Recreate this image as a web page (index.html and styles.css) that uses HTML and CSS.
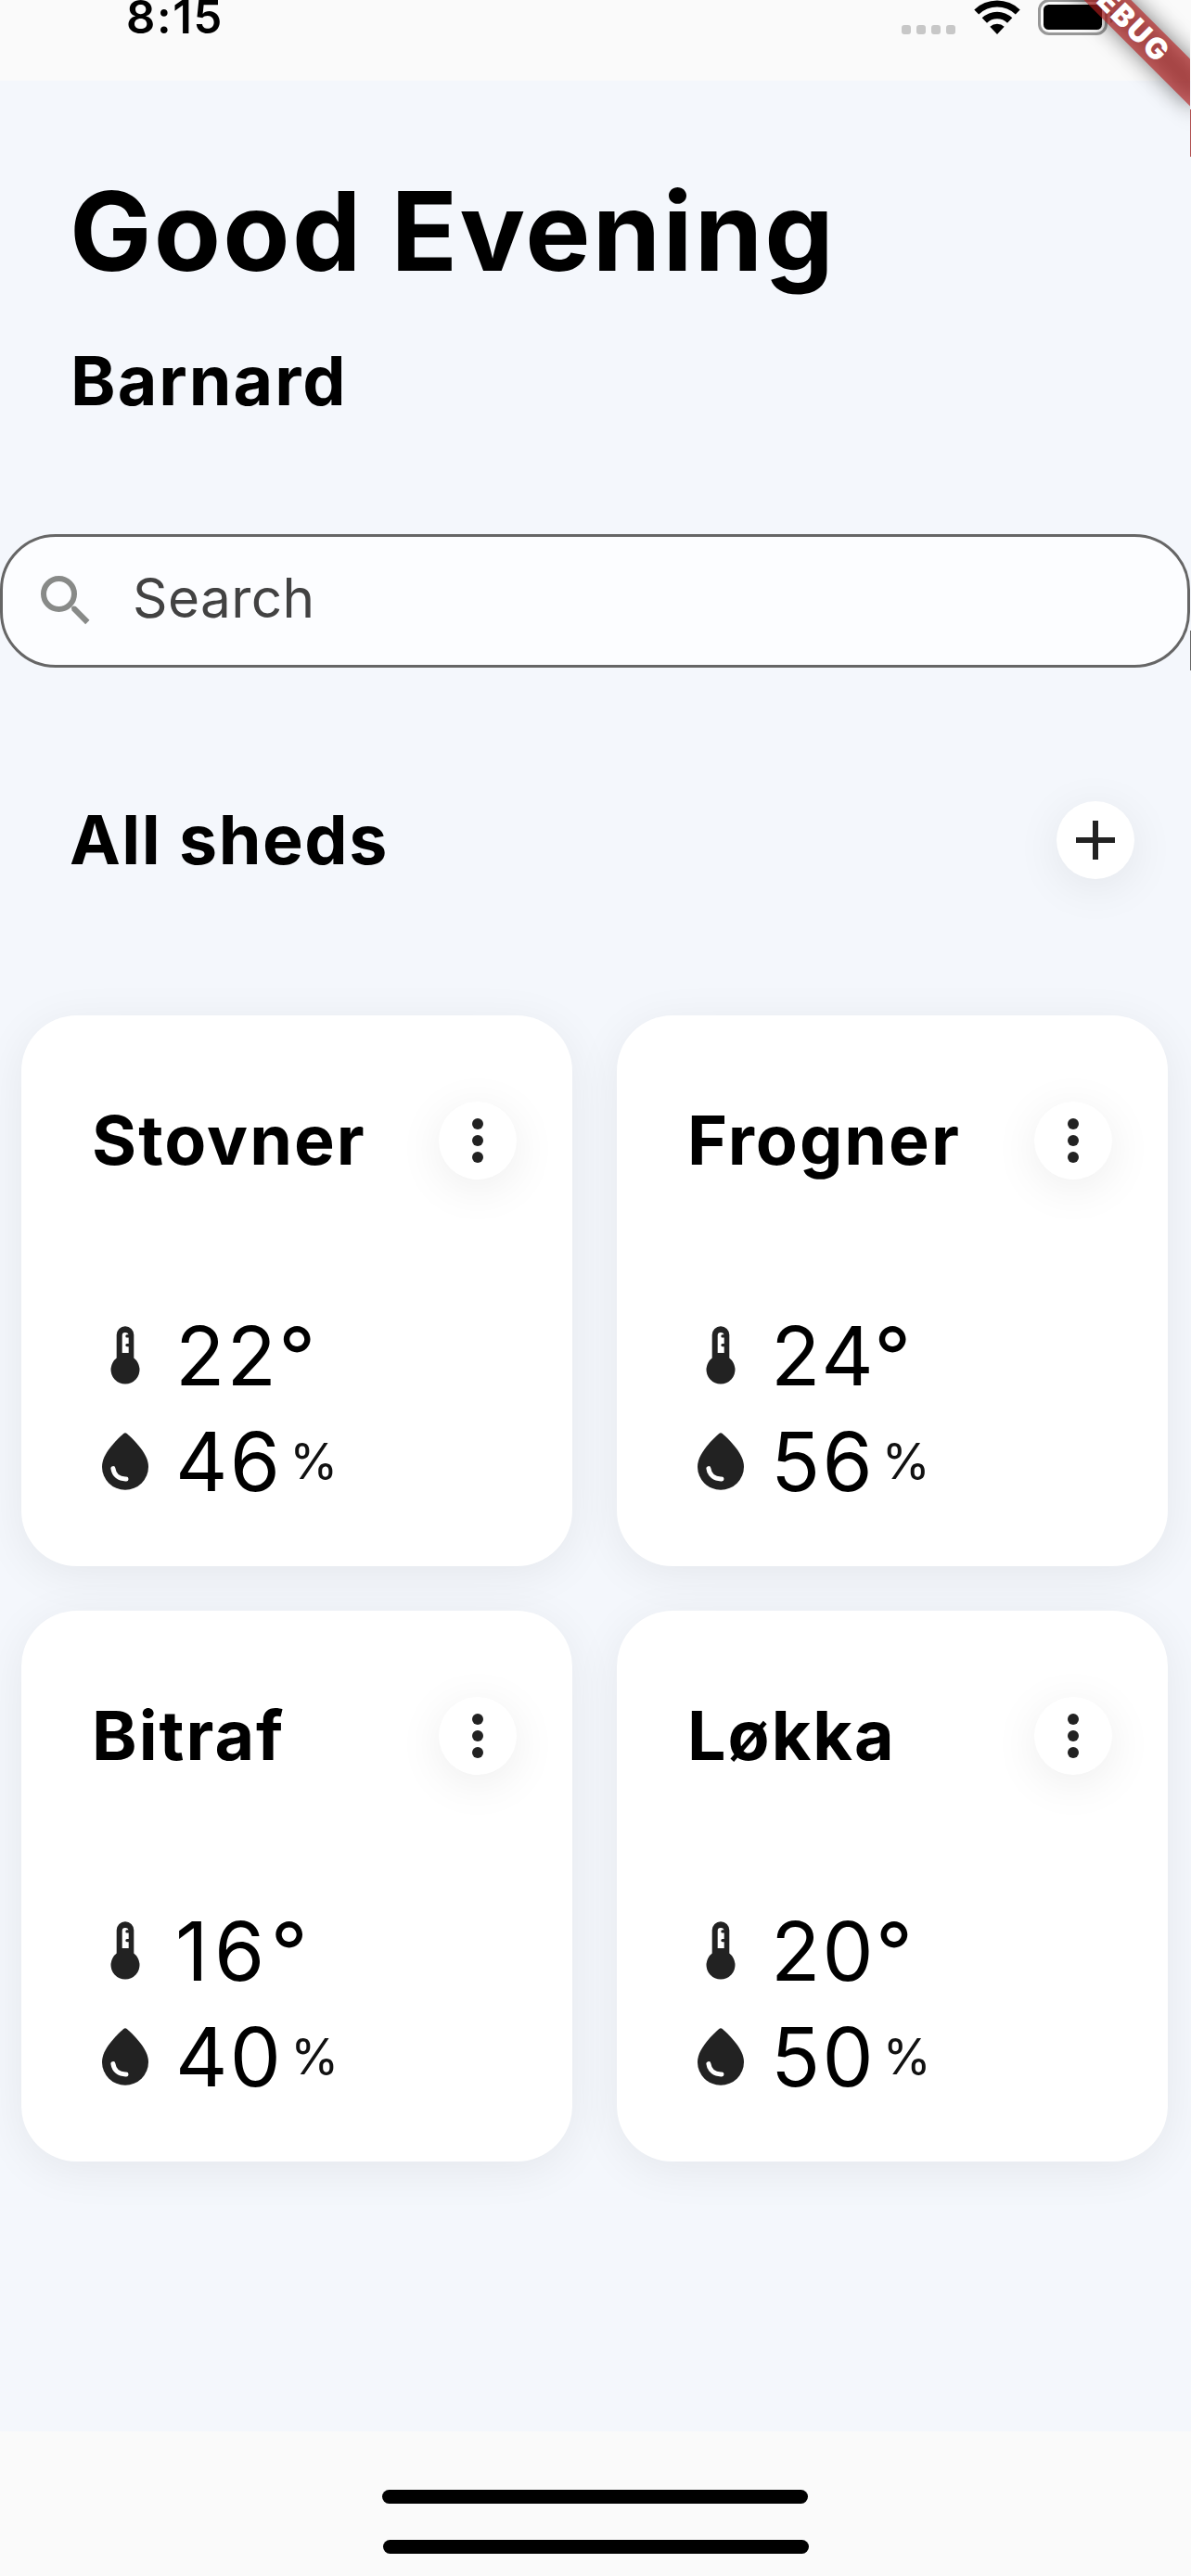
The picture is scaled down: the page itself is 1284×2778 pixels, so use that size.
FILE: index.html
```html
<!DOCTYPE html>
<html lang="en">
<head>
<meta charset="utf-8">
<title>Sheds</title>
<link rel="stylesheet" href="styles.css">
</head>
<body>
<svg class="symbols" aria-hidden="true">
  <symbol id="thermometer" viewBox="0 0 72 72">
    <path fill="#222" d="M26.7 38.6V13.6a9.3 9.3 0 0 1 18.6 0v25A15.5 15.5 0 1 1 26.7 38.6z"/>
    <path fill="#fff" d="M32.7 33V14.3a3.3 3.3 0 0 1 3.5-3.3q2.6 0 3.4 2.3h-1.700a1.600 1.600 0 0 0 0 3.200h1.800v6.500h-1.800a1.600 1.600 0 0 0 0 3.200h1.800V33z"/>
  </symbol>
  <symbol id="drop" viewBox="0 0 72 72">
    <path fill="#222" d="M34.200 6.100q1.800-1.600 3.600 0C46 13.500 61 28 61 41.700a25 25 0 0 1-50 0C11 28 26 13.500 34.200 6.100z"/>
    <path fill="none" stroke="#fff" stroke-width="5" stroke-linecap="round" d="M22.900 43.600C24 51 29.500 55.200 37 54.900"/>
  </symbol>
  <symbol id="more" viewBox="0 0 72 72">
    <g fill="#222"><circle cx="36" cy="18" r="6"/><circle cx="36" cy="36" r="6"/><circle cx="36" cy="54" r="6"/></g>
  </symbol>
</svg>

<header class="status">
  <span class="time">8:15</span>
  <div class="indicators">
    <div class="signal"><i></i><i></i><i></i><i></i></div>
    <svg class="wifi" width="50" height="38" viewBox="0 0 50 38">
      <path d="M0.300 10.400A35.500 35.500 0 0 1 49.700 10.400L44.800 15.500A28.500 28.500 0 0 0 5.200 15.500z"/>
      <path d="M8.700 19.300A23.500 23.500 0 0 1 41.300 19.300L36 24.700A16 16 0 0 0 14 24.700z"/>
      <path d="M17.300 28.700A11.500 11.500 0 0 1 32.700 28.700L25 37z"/>
    </svg>
    <svg class="battery" width="84" height="40" viewBox="0 0 84 40">
      <rect x="1.500" y="1.500" width="72" height="36" rx="10.500" fill="none" stroke="#979797" stroke-width="3"/>
      <rect x="6" y="6" width="63" height="27" rx="5.500"/>
      <path fill="#979797" d="M78 14q4 2 4 6t-4 6z"/>
    </svg>
  </div>
</header>

<main class="screen">
  <h1 class="greeting">Good Evening</h1>
  <h2 class="name">Barnard</h2>

  <div class="search">
    <svg class="search-icon" width="72" height="72" viewBox="0 0 24 24"><circle cx="9.500" cy="9.500" r="5.500" fill="none" stroke="#888a88" stroke-width="2"/><path fill="#888a88" d="M14 14.700q0-.900.900-.900l.700.200 4.900 4.900-1.450 1.500L14.200 15.500z"/></svg>
    <span class="search-hint">Search</span>
  </div>

  <div class="section">
    <h2 class="section-title">All sheds</h2>
    <button class="round"><svg width="72" height="72" viewBox="0 0 72 72"><path fill="#222" d="M33 15h6v18h18v6H39v18h-6V39H15v-6h18z"/></svg></button>
  </div>

  <div class="grid">
    <article class="card">
      <div class="card-head"><h3>Stovner</h3><button class="round"><svg width="72" height="72"><use href="#more"/></svg></button></div>
      <div class="reading"><svg width="72" height="72"><use href="#thermometer"/></svg><span class="value">22°</span></div>
      <div class="reading"><svg width="72" height="72"><use href="#drop"/></svg><span class="value">46</span><span class="unit">%</span></div>
    </article>
    <article class="card">
      <div class="card-head"><h3>Frogner</h3><button class="round"><svg width="72" height="72"><use href="#more"/></svg></button></div>
      <div class="reading"><svg width="72" height="72"><use href="#thermometer"/></svg><span class="value">24°</span></div>
      <div class="reading"><svg width="72" height="72"><use href="#drop"/></svg><span class="value">56</span><span class="unit">%</span></div>
    </article>
    <article class="card">
      <div class="card-head"><h3>Bitraf</h3><button class="round"><svg width="72" height="72"><use href="#more"/></svg></button></div>
      <div class="reading"><svg width="72" height="72"><use href="#thermometer"/></svg><span class="value value-wide">16°</span></div>
      <div class="reading"><svg width="72" height="72"><use href="#drop"/></svg><span class="value">40</span><span class="unit">%</span></div>
    </article>
    <article class="card">
      <div class="card-head"><h3>Løkka</h3><button class="round"><svg width="72" height="72"><use href="#more"/></svg></button></div>
      <div class="reading"><svg width="72" height="72"><use href="#thermometer"/></svg><span class="value">20°</span></div>
      <div class="reading"><svg width="72" height="72"><use href="#drop"/></svg><span class="value">50</span><span class="unit">%</span></div>
    </article>
  </div>
</main>

<footer class="home"><div class="bar"></div><div class="bar bar-system"></div></footer>

<div class="ribbon-clip">
  <div class="ribbon-shadow"></div>
  <div class="ribbon">DEBUG</div>
</div>
<div class="edge edge-ribbon"></div>
<div class="edge edge-field"></div>
</body>
</html>
```
FILE: styles.css
```css
* { box-sizing: border-box; }

body {
  position: relative;
  display: flex;
  flex-direction: column;
  width: 1284px;
  height: 2778px;
  margin: 0;
  overflow: hidden;
  background: #fafafa;
  color: #000;
  font-family: Inter, "Liberation Sans", sans-serif;
}

h1, h2, h3 { margin: 0; font-weight: 700; white-space: nowrap; }
svg { display: block; flex: none; }
.symbols { position: absolute; width: 0; height: 0; }

/* Status bar */
.status {
  display: flex;
  justify-content: space-between;
  height: 87px;
  padding: 0 81px 0 136px;
}
.time {
  height: 38px;
  font-size: 49px;
  font-weight: 600;
  line-height: 38px;
  letter-spacing: 1.600px;
}
.indicators { display: flex; align-items: flex-start; }
.signal { display: flex; gap: 6px; margin: 27px 20px 0 0; }
.signal i { width: 10px; height: 10px; border-radius: 3px; background: #c7c7c7; }
.wifi { margin-right: 19px; }
.battery { margin-top: -1px; }

/* Content */
.screen { height: 2535px; padding-top: 92px; background: #f4f7fc; }
.greeting {
  padding-left: 75px;
  font-size: 118px;
  line-height: 140px;
  letter-spacing: 2.200px;
}
.name, .section-title, .card h3 {
  font-size: 73.500px;
  line-height: 88px;
  letter-spacing: 2px;
}
.name { margin-top: 48px; padding-left: 76px; }

.search {
  display: flex;
  align-items: center;
  width: 1283px;
  height: 144px;
  margin-top: 121px;
  padding-left: 32px;
  border: 3px solid #666;
  border-radius: 60px;
  background: #fcfdff;
}
.search-hint {
  margin-left: 36px;
  padding-bottom: 6px;
  color: #424242;
  font-size: 58.500px;
  line-height: 70px;
  letter-spacing: .4px;
}

.section {
  display: flex;
  align-items: center;
  justify-content: space-between;
  height: 84px;
  margin-top: 144px;
  padding: 0 61px 0 75px;
}
.section .section-title { letter-spacing: 1.500px; }

.round {
  display: grid;
  place-items: center;
  width: 84px;
  height: 84px;
  padding: 0;
  border: 0;
  border-radius: 50%;
  background: #fff;
  box-shadow: 0 9px 50px rgba(0, 0, 0, .075);
}

.grid {
  display: grid;
  grid-template-columns: 594px 594px;
  gap: 48px;
  margin-top: 147px;
  padding-left: 23px;
}
.card {
  height: 594px;
  padding: 93px 60px 0 76px;
  border-radius: 60px;
  background: #fff;
  box-shadow: 0 9px 50px rgba(0, 0, 0, .065);
}
.card-head {
  display: flex;
  align-items: center;
  justify-content: space-between;
  height: 84px;
  margin-bottom: 133px;
}
.reading { display: flex; align-items: center; height: 114px; }
.value {
  margin-left: 18px;
  font-size: 87.500px;
  line-height: 106px;
  letter-spacing: 2.200px;
}
.value-wide { letter-spacing: 6.500px; }
.unit { margin-left: 8px; color: #111; font-size: 53px; line-height: 106px; }

/* Home indicators */
.home { display: flex; flex-direction: column; padding: 63px 0 0 412px; gap: 39px; }
.bar { width: 459px; height: 15px; border-radius: 8px; background: #000; }
.bar-system { margin-left: 1px; }

/* Corner ribbon, laid over the status bar */
.ribbon-clip {
  position: absolute;
  top: 0;
  right: 1px;
  width: 300px;
  height: 300px;
  overflow: hidden;
}
.ribbon, .ribbon-shadow {
  position: absolute;
  top: 0;
  left: 108.500px;
  width: 240px;
  height: 36px;
  transform: rotate(45deg);
}
.ribbon-shadow { background: rgba(0, 0, 0, .5); filter: blur(12px); }
.ribbon {
  padding-left: 4px;
  background: rgba(183, 28, 28, .627);
  color: #fff;
  font-size: 31.500px;
  font-weight: 900;
  line-height: 36px;
  letter-spacing: 2.200px;
  text-align: center;
}

/* Slivers along the right edge of the screen */
.edge { position: absolute; right: 0; width: 1px; }
.edge-ribbon { top: 118px; height: 51px; background: #b05050; }
.edge-field { top: 680px; height: 43px; background: #666; }
```
